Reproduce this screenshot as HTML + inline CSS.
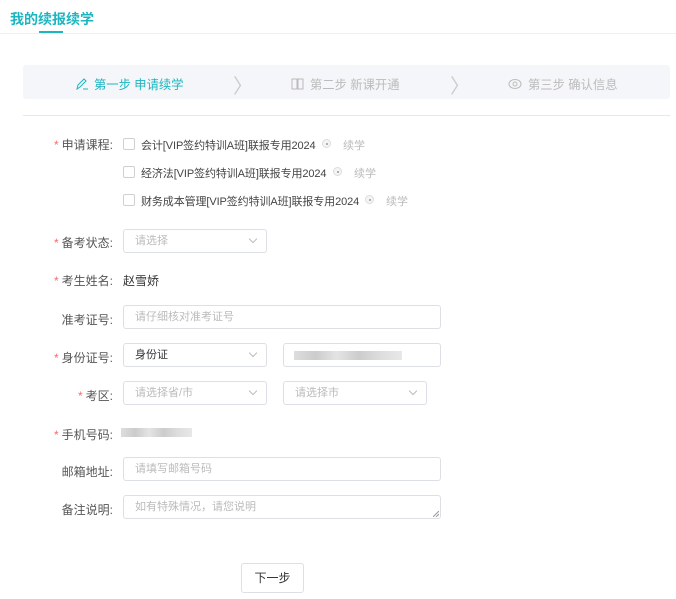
<!DOCTYPE html><html><head><meta charset="utf-8"><style>
*{box-sizing:border-box;margin:0;padding:0}
body{width:676px;height:599px;background:#fff;font-family:"Liberation Sans","Noto Sans CJK SC",sans-serif;font-size:12px;color:#333;position:relative;overflow:hidden}
.a{position:absolute}
.title{left:10px;top:9px;font-size:14px;font-weight:bold;color:#1cb5c0}
.ul{left:39px;top:31px;width:24px;height:2px;background:#1cb5c0}
.hl{left:0;top:33px;width:676px;height:1px;background:#eef0f3}
.bar{left:23px;top:65px;width:647px;height:34px;background:#f5f6f9;border-radius:3px}
.st{top:75px;font-size:12.3px;color:#bbb}
.sep{left:23px;top:115px;width:647px;height:1px;background:#e8e8e8}
.lb{width:113px;left:0;text-align:right;color:#555}
.lb i{color:#f56c6c;font-style:normal;margin-right:3px}
.cb{left:123px;width:12px;height:12px;border:1px solid #d0d0d0;border-radius:2px}
.ct{font-size:11px;color:#444;letter-spacing:-0.1px}
.rd{width:9px;height:9px;border:1px solid #ddd;border-radius:50%;background:#f4f4f4}
.rd:after{content:"";position:absolute;left:2.5px;top:2.5px;width:2px;height:2px;background:#999;border-radius:50%}
.gx{color:#bbb;font-size:11px}
.in{border:1px solid #dcdfe6;border-radius:3px;height:24px;padding:0 11px;line-height:22px;color:#bbb;font-size:11px}
.in.s:after{content:"";position:absolute;right:10px;top:6px;width:5px;height:5px;border-right:1px solid #bbb;border-bottom:1px solid #bbb;transform:rotate(45deg)}
.blur{background:linear-gradient(90deg,#ddd 0,#ccc 20%,#e4e4e4 40%,#ccc 60%,#ddd 80%,#e8e8e8);height:9px}
.btn{left:241px;top:563px;width:63px;height:30px;border:1px solid #dcdfe6;border-radius:3px;text-align:center;line-height:28px;color:#333}
</style></head><body>
<div class="a title">我的续报续学</div><div class="a ul"></div><div class="a hl"></div>
<div class="a bar"></div>
<div class="a st" style="left:75px;color:#1cb5c0"><svg width="14" height="14" viewBox="0 0 14 14" style="vertical-align:-2px;margin-right:5px"><path d="M2 12 L3 8 L9 2 L11 4 L5 10 Z M8 12 H13" fill="none" stroke="#1cb5c0" stroke-width="1"/></svg>第一步 申请续学</div>
<div class="a st" style="left:233px;top:70px;font-size:20px;color:#ccc">〉</div>
<div class="a st" style="left:291px"><svg width="13" height="12" viewBox="0 0 13 12" style="vertical-align:-1px;margin-right:6px"><path d="M1 1 H6 V11 H1 Z M7 1 H12 V11 H7 Z" fill="none" stroke="#bbb"/></svg>第二步 新课开通</div>
<div class="a st" style="left:450px;top:70px;font-size:20px;color:#ccc">〉</div>
<div class="a st" style="left:508px"><svg width="14" height="12" viewBox="0 0 14 12" style="vertical-align:-1px;margin-right:6px"><ellipse cx="7" cy="6" rx="6" ry="4.5" fill="none" stroke="#bbb"/><circle cx="7" cy="6" r="2" fill="none" stroke="#bbb"/></svg>第三步 确认信息</div>
<div class="a sep"></div>

<div class="a lb" style="top:136px"><i>*</i>申请课程:</div>
<div class="a cb" style="top:138px"></div><div class="a ct" style="left:141px;top:137px">会计[VIP签约特训A班]联报专用2024</div><div class="a rd" style="left:322px;top:139px"></div><div class="a gx" style="left:343px;top:137px">续学</div>
<div class="a cb" style="top:166px"></div><div class="a ct" style="left:141px;top:165px">经济法[VIP签约特训A班]联报专用2024</div><div class="a rd" style="left:333px;top:167px"></div><div class="a gx" style="left:354px;top:165px">续学</div>
<div class="a cb" style="top:194px"></div><div class="a ct" style="left:141px;top:193px">财务成本管理[VIP签约特训A班]联报专用2024</div><div class="a rd" style="left:365px;top:195px"></div><div class="a gx" style="left:386px;top:193px">续学</div>

<div class="a lb" style="top:234px"><i>*</i>备考状态:</div>
<div class="a in s" style="left:123px;top:229px;width:144px">请选择</div>
<div class="a lb" style="top:272px"><i>*</i>考生姓名:</div><div class="a" style="left:123px;top:272px">赵雪娇</div>
<div class="a lb" style="top:311px">准考证号:</div>
<div class="a in" style="left:123px;top:305px;width:318px">请仔细核对准考证号</div>
<div class="a lb" style="top:349px"><i>*</i>身份证号:</div>
<div class="a in s" style="left:123px;top:343px;width:144px;color:#333">身份证</div>
<div class="a in" style="left:283px;top:343px;width:158px"></div><div class="a blur" style="left:294px;top:351px;width:108px"></div>
<div class="a lb" style="top:387px"><i>*</i>考区:</div>
<div class="a in s" style="left:123px;top:381px;width:144px">请选择省/市</div>
<div class="a in s" style="left:283px;top:381px;width:144px">请选择市</div>
<div class="a lb" style="top:426px"><i>*</i>手机号码:</div><div class="a blur" style="left:121px;top:428px;width:71px"></div>
<div class="a lb" style="top:463px">邮箱地址:</div>
<div class="a in" style="left:123px;top:457px;width:318px">请填写邮箱号码</div>
<div class="a lb" style="top:501px">备注说明:</div>
<div class="a in" style="left:123px;top:495px;width:318px">如有特殊情况，请您说明</div>
<svg class="a" style="left:433px;top:511px" width="6" height="6"><path d="M0 6 L6 0 M3 6 L6 3" stroke="#999"/></svg>
<div class="a btn">下一步</div>
</body></html>
